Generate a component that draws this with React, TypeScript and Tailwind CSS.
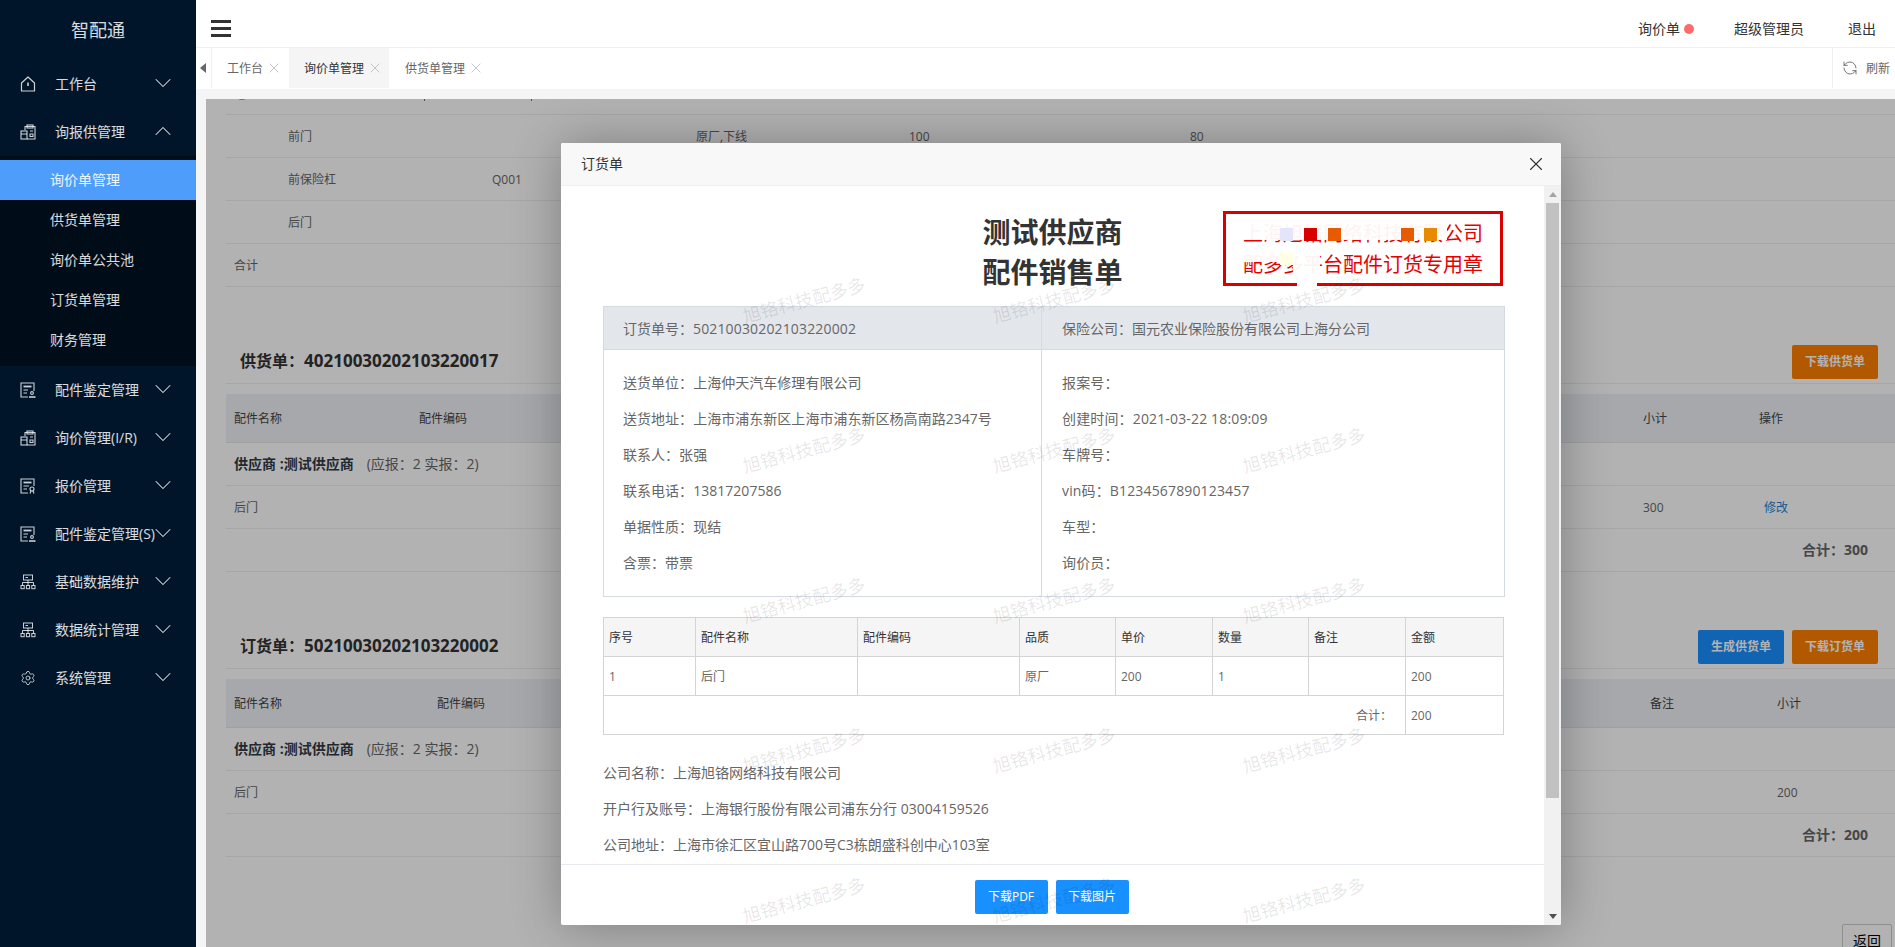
import { ChevronDown, ChevronUp, RefreshCcw, Settings, X } from "lucide-react";
import type { ReactNode } from "react";

// sidebar icons, hand drawn to match the original icon font
function IconHome() {
  return (
    <svg width="16" height="16" viewBox="0 0 16 16" fill="none" stroke="currentColor" strokeWidth="1.2" strokeLinejoin="round">
      <path d="M1.5 7 L8 1 L14.5 7 V15 H1.5 Z" />
      <path d="M8 6.5 V10" strokeWidth="1.6" />
    </svg>
  );
}
function IconClip() {
  return (
    <svg width="16" height="16" viewBox="0 0 16 16" fill="none" stroke="currentColor" strokeWidth="1.1">
      <path d="M5 6 V2.5 H15 V15 H7" />
      <rect x="7" y="1" width="6" height="3" />
      <rect x="1" y="7" width="6" height="8" />
      <path d="M1 10 H7 M10 7 H13 M10 10 H13 V12.5 H10 Z" />
    </svg>
  );
}
function IconStamp() {
  return (
    <svg width="16" height="16" viewBox="0 0 16 16" fill="none" stroke="currentColor" strokeWidth="1.1">
      <path d="M8 15 H1 V1 H14 V9" />
      <path d="M3.5 4.5 H11.5" strokeWidth="1.8" />
      <path d="M3.5 8 H8 M3.5 11 H7" />
      <circle cx="12" cy="11" r="1.4" />
      <path d="M9 15 H15.5" strokeWidth="1.6" />
    </svg>
  );
}
function IconDocSearch() {
  return (
    <svg width="16" height="16" viewBox="0 0 16 16" fill="none" stroke="currentColor" strokeWidth="1.1">
      <path d="M8 15 H1 V1 H14 V8" />
      <path d="M3.5 4.5 H11.5" strokeWidth="1.8" />
      <path d="M3.5 8 H9 M3.5 11 H7" />
      <circle cx="12" cy="11" r="2" />
      <path d="M10 15.5 L11 13 M14 15.5 L13 13" />
    </svg>
  );
}
function IconOrg() {
  return (
    <svg width="16" height="16" viewBox="0 0 16 16" fill="none" stroke="currentColor" strokeWidth="1">
      <rect x="3.5" y="1" width="9" height="5" />
      <path d="M5.5 3.5 H8" />
      <path d="M8 6 V11 M2.5 11 V8.5 H13.5 V11" />
      <rect x="1" y="11.5" width="3.2" height="3.2" />
      <rect x="6.4" y="11.5" width="3.2" height="3.2" />
      <rect x="11.8" y="11.5" width="3.2" height="3.2" />
    </svg>
  );
}

const subMenu = ["询价单管理", "供货单管理", "询价单公共池", "订货单管理", "财务管理"];

function NavItem({ icon, label, open }: { icon: ReactNode; label: string; open?: boolean }) {
  return (
    <div className="flex h-[48px] items-center pl-[20px] text-white/85">
      <span className="w-[35px] shrink-0 text-white/80">{icon}</span>
      <span className="w-[101px] shrink-0 pb-[2px] text-[14px] whitespace-nowrap">{label}</span>
      {open ? (
        <ChevronUp size={28} strokeWidth={0.9} className="-ml-[7px] shrink-0 -translate-y-px" />
      ) : (
        <ChevronDown size={28} strokeWidth={0.9} className="-ml-[7px] shrink-0 -translate-y-px" />
      )}
    </div>
  );
}

function Sidebar() {
  return (
    <aside className="h-full w-[196px] shrink-0 bg-[#001529]">
      <div className="flex h-[60px] items-center justify-center text-[18px] text-white/85">智配通</div>
      <NavItem icon={<IconHome />} label="工作台" />
      <NavItem icon={<IconClip />} label="询报供管理" open />
      <div className="bg-[#000c17] pt-[4px] pb-[6px]">
        {subMenu.map((s, i) => (
          <div
            key={s}
            className={
              i === 0
                ? "flex h-[40px] items-center bg-[#4f9dfa] pb-[2px] pl-[50px] text-[14px] text-white/90"
                : "flex h-[40px] items-center pb-[2px] pl-[50px] text-[14px] text-white/85"
            }
          >
            {s}
          </div>
        ))}
      </div>
      <NavItem icon={<IconStamp />} label="配件鉴定管理" />
      <NavItem icon={<IconClip />} label="询价管理(I/R)" />
      <NavItem icon={<IconDocSearch />} label="报价管理" />
      <NavItem icon={<IconStamp />} label="配件鉴定管理(S)" />
      <NavItem icon={<IconOrg />} label="基础数据维护" />
      <NavItem icon={<IconOrg />} label="数据统计管理" />
      <NavItem icon={<Settings size={16} strokeWidth={1.3} />} label="系统管理" />
    </aside>
  );
}

function TopBar() {
  return (
    <div className="flex h-[48px] shrink-0 items-center justify-between border-b border-[#f0f0f0] bg-white pt-[10px] pr-[19px] pl-[15px] text-[14px] text-[#333]">
      <div className="flex w-[20px] flex-col gap-[4px]">
        <div className="h-[3px] bg-[#333]" />
        <div className="h-[3px] bg-[#333]" />
        <div className="h-[3px] bg-[#333]" />
      </div>
      <div className="flex items-center">
        <span>询价单</span>
        <span className="ml-[4px] h-[10px] w-[10px] rounded-full bg-[#ff6b6b]" />
        <span className="ml-[40px]">超级管理员</span>
        <span className="ml-[44px]">退出</span>
      </div>
    </div>
  );
}

function Tab({ label, active, pad }: { label: string; active?: boolean; pad: string }) {
  return (
    <div className={active ? `flex h-[40px] items-center bg-[#f5f5f5] ${pad} text-[12px] text-[#333]` : `flex h-[40px] items-center ${pad} text-[12px] text-[#666]`}>
      <span className="pt-[2px]">{label}</span>
      <X size={16} strokeWidth={1} className="ml-[3px] text-[#aaa]" />
    </div>
  );
}

function TabBar() {
  return (
    <div className="flex h-[41px] shrink-0 bg-white">
      <div className="flex h-[40px] w-[16px] items-center justify-end border-r border-[#f0f0f0] pr-[5px]">
        <span className="h-0 w-0 border-y-[5px] border-r-[6px] border-y-transparent border-r-[#666]" />
      </div>
      <Tab label="工作台" pad="w-[77px] pl-[15px]" />
      <Tab label="询价单管理" active pad="w-[100px] pl-[15px]" />
      <Tab label="供货单管理" pad="w-[100px] pl-[16px]" />
      <div className="flex-1" />
      <div className="flex h-[40px] w-[63px] items-center border-l border-[#f0f0f0] pl-[9px] text-[12px] text-[#666]">
        <RefreshCcw size={16} strokeWidth={1.2} className="text-[#555]" />
        <span className="ml-[8px] pt-[2px]">刷新</span>
      </div>
    </div>
  );
}

function Row({ children, className = "" }: { children?: ReactNode; className?: string }) {
  return <div className={`flex h-[43px] items-center border-b border-[#eee] text-[12px] text-[#666] ${className}`}>{children}</div>;
}

function Heading({ title, no, children }: { title: string; no: string; children: ReactNode }) {
  return (
    <div className="mt-[58px] flex h-[39px] items-start justify-between border-b border-[#eee] pr-[17px] pl-[14px]">
      <div className="flex h-[34px] items-center pb-[2px] text-[16px] font-bold text-[#333]">
        {title}：<span className="text-[17px]">{no}</span>
      </div>
      <div className="flex gap-[8px]">{children}</div>
    </div>
  );
}

function ActionBtn({ label, color }: { label: string; color: string }) {
  return <div className={`flex h-[34px] w-[86px] items-center justify-center rounded-[2px] text-[12px] font-bold text-white ${color}`}>{label}</div>;
}

function Supplier() {
  return (
    <Row className="pb-[2px] pl-[8px]">
      <span className="text-[14px] font-bold text-[#303a46]">供应商 :测试供应商</span>
      <span className="ml-[13px] text-[14px] text-[#666]">(应报：2 实报：2)</span>
    </Row>
  );
}

function Background() {
  return (
    <div className="pl-[20px]">
      {/* scrolled off row, only its bottom edge is left */}
      <div className="flex h-[16px] overflow-hidden border-b border-[#eee] pl-[8px]">
        <span className="-mt-[15px] h-[16px] w-[16px] rounded-full border border-[#999]" />
        <span className="ml-[174px] h-[2px] w-[1px] bg-[#777]" />
        <span className="ml-[106px] h-[2px] w-[1px] bg-[#777]" />
      </div>
      <Row className="pt-[2px] pl-[62px]">
        <span className="w-[408px]">前门</span>
        <span className="w-[213px]">原厂,下线</span>
        <span className="w-[281px]">100</span>
        <span>80</span>
      </Row>
      <Row className="pt-[2px] pl-[62px]">
        <span className="w-[204px]">前保险杠</span>
        <span>Q001</span>
      </Row>
      <Row className="pt-[2px] pl-[62px]">后门</Row>
      <Row className="pt-[2px] pl-[8px]">合计</Row>

      <Heading title="供货单" no="40210030202103220017">
        <ActionBtn label="下载供货单" color="bg-[#ff8000]" />
      </Heading>
      <div className="mt-[10px] flex h-[49px] items-center border-b border-[#e6e6e6] bg-[#f0f1f6] pt-[2px] pl-[8px] text-[12px] text-[#444]">
        <span className="w-[185px]">配件名称</span>
        <span className="w-[1224px]">配件编码</span>
        <span className="w-[116px]">小计</span>
        <span>操作</span>
      </div>
      <Supplier />
      <Row className="pt-[2px] pl-[8px]">
        <span className="w-[1409px]">后门</span>
        <span className="w-[121px]">300</span>
        <span className="text-[#1f7fd6]">修改</span>
      </Row>
      <Row className="justify-end pr-[27px] pb-[2px] text-[14px] font-bold text-[#303a46]">合计：300</Row>

      <Heading title="订货单" no="50210030202103220002">
        <ActionBtn label="生成供货单" color="bg-[#1890ff]" />
        <ActionBtn label="下载订货单" color="bg-[#ff8000]" />
      </Heading>
      <div className="mt-[10px] flex h-[49px] items-center border-b border-[#e6e6e6] bg-[#f0f1f6] pt-[2px] pl-[8px] text-[12px] text-[#444]">
        <span className="w-[203px]">配件名称</span>
        <span className="w-[1213px]">配件编码</span>
        <span className="w-[127px]">备注</span>
        <span>小计</span>
      </div>
      <Supplier />
      <Row className="pt-[2px] pl-[8px]">
        <span className="w-[1543px]">后门</span>
        <span>200</span>
      </Row>
      <Row className="justify-end pr-[27px] pb-[2px] text-[14px] font-bold text-[#303a46]">合计：200</Row>

      <div className="mt-[67px] flex justify-end pr-[3px]">
        <div className="flex h-[32px] w-[50px] items-center justify-center rounded-[2px] border border-[#ccc] text-[14px] text-black">返回</div>
      </div>
    </div>
  );
}

const leftInfo = ["送货单位：上海仲天汽车修理有限公司", "送货地址：上海市浦东新区上海市浦东新区杨高南路2347号", "联系人：张强", "联系电话：13817207586", "单据性质：现结", "含票：带票"];
const rightInfo = ["报案号：", "创建时间：2021-03-22 18:09:09", "车牌号：", "vin码：B1234567890123457", "车型：", "询价员："];
const colWidths = ["w-[92px]", "w-[162px]", "w-[162px]", "w-[96px]", "w-[97px]", "w-[96px]", "w-[97px]", "w-[98px]"];
const headCols = ["序号", "配件名称", "配件编码", "品质", "单价", "数量", "备注", "金额"];
const bodyCols = ["1", "后门", "", "原厂", "200", "1", "", "200"];

function Seal() {
  const squares = [
    "left-[57px] top-[17px] bg-[#e4e4fb]",
    "left-[81px] top-[17px] bg-[#d90000]",
    "left-[105px] top-[17px] bg-[#e85a00]",
    "left-[178px] top-[17px] bg-[#e85a00]",
    "left-[201px] top-[17px] bg-[#e88a00]",
    "left-[57px] top-[41px] bg-[#ffffe6]",
  ];
  return (
    <div className="absolute top-[25px] left-[662px] h-[75px] w-[280px]">
      <div className="h-full w-full border-[3px] border-[#d90000] pt-[4px] text-center text-[20px] leading-[31px] text-[#e60000]">
        <div>上海旭铬网络科技有限公司</div>
        <div>配多多平台配件订货专用章</div>
      </div>
      {/* the stamp in the picture is broken up by white and coloured blocks */}
      <div className="absolute top-[11px] left-[17px] h-[18px] w-[207px] bg-white/95" />
      <div className="absolute top-[42px] left-[17px] h-[9px] w-[55px] bg-white/95" />
      <div className="absolute top-[40px] left-[70px] h-[26px] w-[27px] bg-white/95" />
      <div className="absolute top-[66px] left-[74px] h-[9px] w-[20px] bg-white" />
      {squares.map((s) => (
        <div key={s} className={`absolute h-[13px] w-[13px] ${s}`} />
      ))}
    </div>
  );
}

function Watermarks() {
  const cells = Array.from({ length: 15 }, (_, i) => i);
  return (
    <div className="pointer-events-none absolute top-[134px] left-[180px] grid grid-cols-[repeat(3,250px)] auto-rows-[150px]">
      {cells.map((i) => (
        <div key={i} className="h-[46px] w-[126px] text-[18px] leading-[46px] whitespace-nowrap text-black/10 -rotate-[15deg]">
          旭铬科技配多多
        </div>
      ))}
    </div>
  );
}

function ScrollTrack() {
  return (
    <div className="flex w-[17px] shrink-0 flex-col bg-[#f1f1f1]">
      <div className="flex h-[17px] items-center justify-center">
        <span className="h-0 w-0 border-x-[4px] border-b-[5px] border-x-transparent border-b-[#a3a3a3]" />
      </div>
      <div className="mx-[2px] h-[595px] bg-[#c1c1c1]" />
      <div className="flex-1" />
      <div className="flex h-[17px] items-center justify-center">
        <span className="h-0 w-0 border-x-[4px] border-t-[5px] border-x-transparent border-t-[#505050]" />
      </div>
    </div>
  );
}

function OrderModal() {
  return (
    <div className="absolute top-[44px] left-[355px] flex h-[782px] w-[1000px] flex-col overflow-hidden rounded-[2px] bg-white shadow-[1px_1px_50px_rgba(0,0,0,0.3)]">
      <div className="flex h-[43px] shrink-0 items-center justify-between border-b border-[#eee] bg-[#f8f8f8] pr-[14px] pl-[20px] text-[14px] text-[#333]">
        <span className="pb-[2px]">订货单</span>
        <X size={22} strokeWidth={1.2} className="text-[#333]" />
      </div>
      <div className="flex min-h-0 flex-1">
        <div className="flex w-[983px] shrink-0 flex-col">
          <div className="relative h-[678px] shrink-0 pt-[26px] pl-[42px] text-[14px] text-[#666]">
            <div className="-ml-[42px] text-center text-[28px] leading-[40px] font-bold text-[#333]">
              <div>测试供应商</div>
              <div>配件销售单</div>
            </div>
            <Seal />

            <div className="mt-[14px] w-[902px] border border-[#d5dae2]">
              <div className="flex h-[43px] items-center border-b border-[#d5dae2] bg-[#e3e7ec]">
                <div className="flex h-full w-[438px] items-center border-r border-[#d5dae2] pl-[19px]">
                  订货单号：<span className="tracking-[0.15px]">50210030202103220002</span>
                </div>
                <div className="pl-[20px]">保险公司：国元农业保险股份有限公司上海分公司</div>
              </div>
              <div className="flex">
                <div className="w-[438px] border-r border-[#d5dae2] pt-[14px] pb-[16px] pl-[19px]">
                  {leftInfo.map((t) => (
                    <div key={t} className="flex h-[36px] items-center tracking-[0.03px]">{t}</div>
                  ))}
                </div>
                <div className="pt-[14px] pb-[16px] pl-[20px]">
                  {rightInfo.map((t) => (
                    <div key={t} className="flex h-[36px] items-center tracking-[0.15px]">{t}</div>
                  ))}
                </div>
              </div>
            </div>

            <table className="mt-[20px] w-[900px] table-fixed border-collapse border border-[#d4d4d4] text-[12px]">
              <thead>
                <tr className="h-[39px] bg-[#f5f5f5] text-left text-[#333]">
                  {headCols.map((h, i) => (
                    <th key={h} className={`border border-[#d4d4d4] pt-[2px] pl-[5px] font-normal ${colWidths[i]}`}>{h}</th>
                  ))}
                </tr>
              </thead>
              <tbody>
                <tr className="h-[39px]">
                  {bodyCols.map((c, i) => (
                    <td key={i} className="border border-[#d4d4d4] pt-[2px] pl-[5px]">{c}</td>
                  ))}
                </tr>
                <tr className="h-[39px]">
                  <td colSpan={7} className="border border-[#d4d4d4] pt-[2px] pr-[13px] text-right">合计：</td>
                  <td className="border border-[#d4d4d4] pt-[2px] pl-[5px]">200</td>
                </tr>
              </tbody>
            </table>

            <div className="mt-[19px]">
              <div className="flex h-[36px] items-center">公司名称：上海旭铬网络科技有限公司</div>
              <div className="flex h-[36px] items-center">开户行及账号：上海银行股份有限公司浦东分行 03004159526</div>
              <div className="flex h-[36px] items-center">公司地址：上海市徐汇区宜山路700号C3栋朗盛科创中心103室</div>
            </div>
          </div>
          <div className="flex flex-1 justify-center gap-[8px] border-t border-[#e6e9ee] pt-[15px] pr-[2px] text-[12px] text-white">
            <div className="flex h-[34px] w-[73px] items-center justify-center rounded-[2px] bg-[#1890ff]">下载PDF</div>
            <div className="flex h-[34px] w-[73px] items-center justify-center rounded-[2px] bg-[#1890ff]">下载图片</div>
          </div>
        </div>
        <ScrollTrack />
      </div>
      <Watermarks />
    </div>
  );
}

export default function App() {
  return (
    <div className="flex h-screen w-full overflow-hidden font-['Open_Sans','Noto_Sans_CJK_SC',sans-serif]">
      <Sidebar />
      <div className="flex min-w-0 flex-1 flex-col bg-[#f5f5f5]">
        <TopBar />
        <TabBar />
        <div className="min-h-0 flex-1 pt-[10px] pl-[10px]">
          <div className="relative h-full overflow-hidden bg-white">
            <Background />
            {/* dim layer and dialog only cover the page body */}
            <div className="absolute inset-0 bg-black/30" />
            <OrderModal />
          </div>
        </div>
      </div>
    </div>
  );
}
